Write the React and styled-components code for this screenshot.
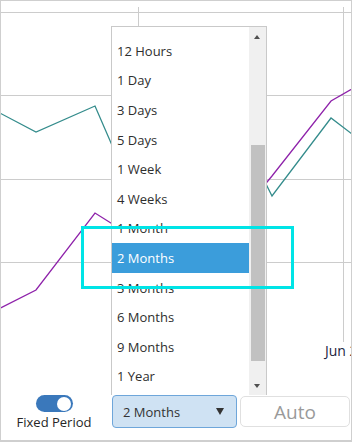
import React from "react";
import styled, { createGlobalStyle } from "styled-components";

const GlobalStyles = createGlobalStyle`
  html, body {
    margin: 0;
    padding: 0;
    background: #fff;
    font-family: "Open Sans", "Noto Sans", sans-serif;
  }
`;

const Frame = styled.div`
  position: relative;
  width: 352px;
  height: 442px;
  box-sizing: border-box;
  border: 1px solid #cfcfcf;
  border-bottom-width: 2px;
  overflow: hidden;
  display: flex;
  flex-direction: column;
  background: #fff;
`;

const ChartArea = styled.div`
  height: 393px;
  flex: none;
`;

const Controls = styled.div`
  display: flex;
  align-items: flex-start;
  padding: 1px 0 0 16px;
`;

const ToggleGroup = styled.div`
  display: flex;
  flex-direction: column;
  align-items: center;
  width: 74px;
`;

const Switch = styled.div`
  width: 37px;
  height: 17px;
  border-radius: 9px;
  background: #3a78bb;
  display: flex;
  align-items: center;
  justify-content: flex-end;
  padding-right: 2px;
  box-sizing: border-box;
`;

const Knob = styled.span`
  width: 14px;
  height: 14px;
  border-radius: 50%;
  background: #fff;
`;

const ToggleLabel = styled.span`
  margin-top: 2px;
  font-size: 13px;
  line-height: 17px;
  color: #262626;
  white-space: nowrap;
`;

const Select = styled.div`
  margin-left: 21px;
  width: 125px;
  height: 33px;
  box-sizing: border-box;
  border: 1px solid #6ea6da;
  border-radius: 4px;
  background: #cfe2f3;
  display: flex;
  align-items: center;
  justify-content: space-between;
  padding: 0 12px 0 10px;
  font-size: 13px;
  color: #333;
`;

const Caret = styled.span`
  width: 0;
  height: 0;
  border-left: 4px solid transparent;
  border-right: 4px solid transparent;
  border-top: 7px solid #333;
`;

const AutoButton = styled.div`
  margin: 1px 0 0 3px;
  width: 110px;
  height: 31px;
  box-sizing: border-box;
  border: 1px solid #e0e0e0;
  border-radius: 5px;
  display: flex;
  align-items: center;
  justify-content: center;
  font-size: 19px;
  color: #9a9a9a;
`;

const Dropdown = styled.div`
  position: absolute;
  left: 110px;
  top: 25px;
  width: 156px;
  height: 369px;
  box-sizing: border-box;
  border: 1px solid #c9c9c9;
  border-bottom: none;
  background: #fff;
  display: flex;
`;

const List = styled.ul`
  flex: 1;
  margin: 0;
  padding: 9px 0 0;
  list-style: none;
  overflow: hidden;
`;

const Item = styled.li`
  height: 29.6px;
  display: flex;
  align-items: center;
  padding-left: 5px;
  font-size: 13px;
  color: ${(p) => (p.$active ? "#fff" : "#2e2e2e")};
  background: ${(p) => (p.$active ? "#3b9ddb" : "transparent")};
`;

const Scrollbar = styled.div`
  position: relative;
  width: 17px;
  background: #f0f0f0;
`;

const Thumb = styled.div`
  position: absolute;
  left: 2px;
  right: 1px;
  top: 118px;
  height: 216px;
  background: #c1c1c1;
`;

const Arrow = styled.span`
  position: absolute;
  left: 5px;
  width: 0;
  height: 0;
  border-left: 3.5px solid transparent;
  border-right: 3.5px solid transparent;
  ${(p) =>
    p.$up
      ? "top: 8px; border-bottom: 4px solid #505050;"
      : "bottom: 7px; border-top: 4px solid #505050;"}
`;

const Highlight = styled.div`
  position: absolute;
  left: 80px;
  top: 225px;
  width: 213px;
  height: 63px;
  box-sizing: border-box;
  border: 3px solid #00e4e6;
`;

const teal = [
  [-23, 101], [36, 132], [95, 106], [154, 242],
  [213, 78], [272, 196], [331, 118], [390, 163],
];
const purple = [
  [-23, 320], [36, 290], [95, 213], [154, 250],
  [213, 247], [272, 176], [331, 101], [390, 67],
];
const pts = (a) => a.map((p) => p.join(",")).join(" ");

const items = [
  "12 Hours", "1 Day", "3 Days", "5 Days", "1 Week", "4 Weeks",
  "1 Month", "2 Months", "3 Months", "6 Months", "9 Months", "1 Year",
];

function Chart() {
  return (
    <svg width="350" height="393" viewBox="1 1 350 393">
      {[12, 95, 179, 262].map((y) => (
        <line key={y} x1="0" x2="352" y1={y + 0.5} y2={y + 0.5} stroke="#cccccc" />
      ))}
      {[138, 343].map((x) => (
        <line key={x} x1={x + 0.5} x2={x + 0.5} y1="7" y2="342" stroke="#cccccc" />
      ))}
      <polyline points={pts(teal)} fill="none" stroke="#348c8c" strokeWidth="1.3" />
      <polyline points={pts(purple)} fill="none" stroke="#8e22aa" strokeWidth="1.3" />
      <text x="325" y="356" fontSize="14" fill="#1b2540" fontFamily="Open Sans, sans-serif">
        Jun 2017
      </text>
    </svg>
  );
}

export default function App() {
  return (
    <>
      <GlobalStyles />
      <Frame>
        <ChartArea>
          <Chart />
        </ChartArea>
        <Controls>
          <ToggleGroup>
            <Switch>
              <Knob />
            </Switch>
            <ToggleLabel>Fixed Period</ToggleLabel>
          </ToggleGroup>
          <Select>
            <span>2 Months</span>
            <Caret />
          </Select>
          <AutoButton>Auto</AutoButton>
        </Controls>
        <Dropdown>
          <List>
            {items.map((t) => (
              <Item key={t} $active={t === "2 Months"}>
                {t}
              </Item>
            ))}
          </List>
          <Scrollbar>
            <Arrow $up />
            <Thumb />
            <Arrow />
          </Scrollbar>
        </Dropdown>
        <Highlight />
      </Frame>
    </>
  );
}
